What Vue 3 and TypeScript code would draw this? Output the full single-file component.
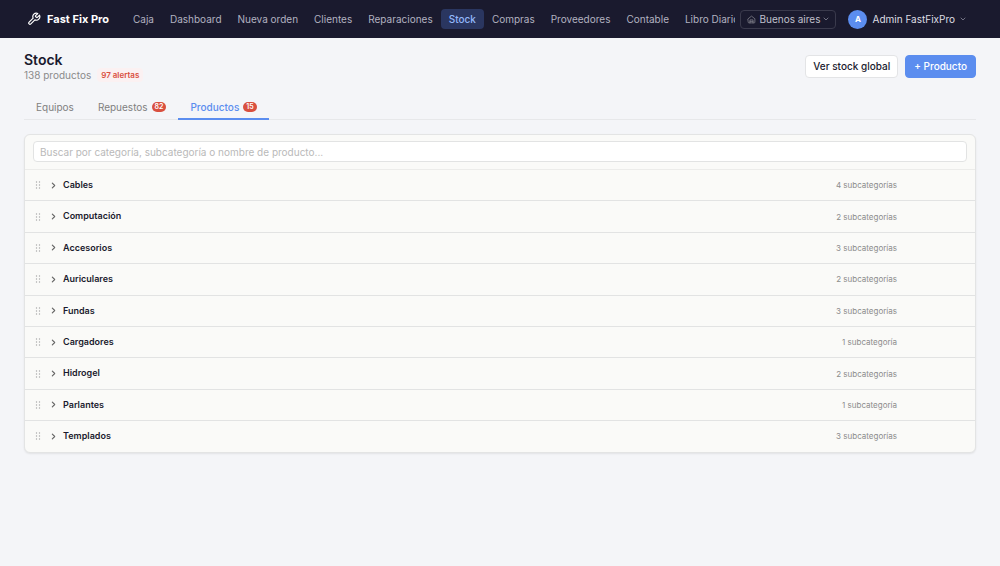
<script setup lang="ts">
import { ref } from 'vue'

interface Tab {
  label: string
  badge?: number
}

interface Category {
  name: string
  count: number
}

const navItems: string[] = [
  'Caja',
  'Dashboard',
  'Nueva orden',
  'Clientes',
  'Reparaciones',
  'Stock',
  'Compras',
  'Proveedores',
  'Contable',
  'Libro Diario',
]

const tabs: Tab[] = [
  { label: 'Equipos' },
  { label: 'Repuestos', badge: 82 },
  { label: 'Productos', badge: 15 },
]

const categories: Category[] = [
  { name: 'Cables', count: 4 },
  { name: 'Computación', count: 2 },
  { name: 'Accesorios', count: 3 },
  { name: 'Auriculares', count: 2 },
  { name: 'Fundas', count: 3 },
  { name: 'Cargadores', count: 1 },
  { name: 'Hidrogel', count: 2 },
  { name: 'Parlantes', count: 1 },
  { name: 'Templados', count: 3 },
]

const activeNav = ref('Stock')
const activeTab = ref('Productos')
const search = ref('')

const countLabel = (n: number): string => `${n} ${n === 1 ? 'subcategoría' : 'subcategorías'}`
</script>

<template>
  <header class="topbar">
    <a href="#" class="brand">
      <svg class="brand-icon" viewBox="0 0 24 24" aria-hidden="true">
        <path d="M14.7 6.3a1 1 0 0 0 0 1.4l1.6 1.6a1 1 0 0 0 1.4 0l3.77-3.77a6 6 0 0 1-7.94 7.94l-6.91 6.91a2.12 2.12 0 0 1-3-3l6.91-6.91a6 6 0 0 1 7.94-7.94l-3.76 3.76z" />
      </svg>
      <span>Fast Fix Pro</span>
    </a>
    <nav class="nav">
      <a
        v-for="item in navItems"
        :key="item"
        href="#"
        class="nav-link"
        :class="{ active: item === activeNav }"
        @click.prevent="activeNav = item"
      >{{ item }}</a>
    </nav>
    <button type="button" class="branch">
      <svg class="home-icon" viewBox="0 0 24 24" aria-hidden="true">
        <path d="M3 10l9-7 9 7v9a2 2 0 0 1-2 2H5a2 2 0 0 1-2-2z" />
        <path d="M8 21v-8h8v8M8 17h8" />
      </svg>
      <span>Buenos aires</span>
      <svg class="caret" viewBox="0 0 24 24" aria-hidden="true"><path d="M4 8l8 8 8-8" /></svg>
    </button>
    <button type="button" class="user">
      <span class="avatar">A</span>
      <span>Admin FastFixPro</span>
      <svg class="caret" viewBox="0 0 24 24" aria-hidden="true"><path d="M4 8l8 8 8-8" /></svg>
    </button>
  </header>

  <main class="page">
    <div class="heading">
      <div>
        <h1>Stock</h1>
        <p class="summary">
          <span>138 productos</span>
          <span class="alerts">97 alertas</span>
        </p>
      </div>
      <div class="actions">
        <button type="button" class="btn">Ver stock global</button>
        <button type="button" class="btn primary">+ Producto</button>
      </div>
    </div>

    <div class="tabs" role="tablist">
      <button
        v-for="tab in tabs"
        :key="tab.label"
        type="button"
        role="tab"
        class="tab"
        :class="{ active: tab.label === activeTab }"
        :aria-selected="tab.label === activeTab"
        @click="activeTab = tab.label"
      >
        <span>{{ tab.label }}</span>
        <span v-if="tab.badge" class="badge">{{ tab.badge }}</span>
      </button>
    </div>

    <section class="panel">
      <div class="search">
        <input
          v-model="search"
          type="text"
          aria-label="Buscar productos"
          placeholder="Buscar por categoría, subcategoría o nombre de producto..."
        />
      </div>
      <ul class="list">
        <li v-for="cat in categories" :key="cat.name" class="row">
          <svg class="grip" viewBox="0 0 6 8" aria-hidden="true">
            <circle cx="1.5" cy="1" r="0.7" /><circle cx="4.5" cy="1" r="0.7" />
            <circle cx="1.5" cy="4" r="0.7" /><circle cx="4.5" cy="4" r="0.7" />
            <circle cx="1.5" cy="7" r="0.7" /><circle cx="4.5" cy="7" r="0.7" />
          </svg>
          <button type="button" class="toggle">
            <svg class="chevron" viewBox="0 0 24 24" aria-hidden="true"><path d="M8 4l8 8-8 8" /></svg>
            <span>{{ cat.name }}</span>
          </button>
          <span class="count">{{ countLabel(cat.count) }}</span>
        </li>
      </ul>
    </section>
  </main>
</template>

<style>
body {
  margin: 0;
  background: #f4f5f8;
}
</style>

<style scoped>
.topbar,
.page,
.topbar button,
.page button,
.page input {
  font-family: Inter, "Liberation Sans", sans-serif;
}

.topbar *,
.page * {
  box-sizing: border-box;
}

button {
  margin: 0;
  padding: 0;
  border: 0;
  background: none;
  cursor: pointer;
}

a {
  text-decoration: none;
}

svg {
  flex: none;
  fill: none;
  stroke: currentColor;
  stroke-linecap: round;
  stroke-linejoin: round;
}

.topbar {
  display: flex;
  align-items: center;
  height: 38px;
  padding: 0 24px;
  background: #1a1a2e;
}

.brand {
  display: flex;
  align-items: center;
  gap: 6px;
  margin: 0 16px 0 3px;
  color: #fff;
  font-size: 11px;
  font-weight: 700;
  white-space: nowrap;
}

.brand-icon {
  width: 14px;
  height: 14px;
  stroke-width: 2;
}

.nav {
  display: flex;
  flex: 1;
  min-width: 0;
  overflow: hidden;
}

.nav-link {
  padding: 0 8px;
  border-radius: 4px;
  color: #b2b2c0;
  font-size: 10px;
  line-height: 20px;
  white-space: nowrap;
}

.nav-link.active {
  background: #2a3660;
  color: #93b8fb;
  font-weight: 500;
}

.branch {
  display: flex;
  align-items: center;
  gap: 3px;
  height: 19px;
  margin-left: 5px;
  padding: 0 6px;
  border: 1px solid #3a3a4c;
  border-radius: 4px;
  color: #c0c0cc;
  font-size: 10px;
  white-space: nowrap;
}

.home-icon {
  width: 9px;
  height: 9px;
  color: #85858f;
  stroke-width: 2;
}

.caret {
  width: 6px;
  height: 6px;
  color: #9090a0;
  stroke-width: 3;
}

.user {
  display: flex;
  align-items: center;
  gap: 5px;
  margin: 0 10px 0 12px;
  color: #dedee4;
  font-size: 10px;
  white-space: nowrap;
}

.avatar {
  width: 19px;
  border-radius: 50%;
  background: #5b8def;
  color: #fff;
  font-size: 8px;
  font-weight: 700;
  line-height: 19px;
  text-align: center;
}

.page {
  padding: 14px 24px 24px;
}

.heading {
  display: flex;
  justify-content: space-between;
}

h1 {
  margin: 0;
  color: #1a1a2e;
  font-size: 14px;
  font-weight: 600;
  line-height: 16px;
}

.summary {
  display: flex;
  align-items: center;
  gap: 6px;
  margin: 0;
  color: #8a8a8a;
  font-size: 10px;
  line-height: 14px;
}

.alerts {
  padding: 0 4px;
  border-radius: 4px;
  background: #fbf1f2;
  color: #d9503f;
  font-size: 8px;
  font-weight: 600;
}

.actions {
  display: flex;
  gap: 7px;
  padding-top: 3px;
}

.btn {
  height: 23px;
  padding: 0 7px 1px;
  border: 1px solid #e3e4e6;
  border-radius: 4px;
  background: #fff;
  color: #1a1a2e;
  font-size: 10px;
  font-weight: 500;
  white-space: nowrap;
}

.btn.primary {
  padding: 0 8px 1px;
  border-color: #5b8def;
  background: #5b8def;
  color: #fff;
}

.tabs {
  display: flex;
  margin: 13px 0 14px;
  border-bottom: 1px solid #e7e8ea;
}

.tab {
  display: flex;
  align-items: center;
  gap: 4px;
  height: 25px;
  margin-bottom: -1px;
  padding: 0 12px;
  border-bottom: 2px solid transparent;
  color: #808080;
  font-size: 10px;
}

.tab.active {
  border-bottom-color: #5b8def;
  color: #5b8def;
  font-weight: 500;
}

.badge {
  padding: 0 3px;
  border-radius: 5px;
  background: #d9503f;
  color: #fff;
  font-size: 7px;
  font-weight: 600;
  line-height: 10px;
}

.panel {
  overflow: hidden;
  border: 1px solid #e3e4e4;
  border-radius: 6px;
  background: #fafaf8;
  box-shadow: 0 1px 2px rgba(0, 0, 0, 0.08);
}

.search {
  padding: 6px 8px 7px;
  border-bottom: 1px solid #ececea;
}

.search input {
  display: block;
  width: 100%;
  height: 21px;
  padding: 0 6px;
  border: 1px solid #e2e3e3;
  border-radius: 4px;
  outline: none;
  background: #fff;
  color: #1a1a2e;
  font-size: 10px;
}

.search input::placeholder {
  color: #b9b9b9;
  opacity: 1;
}

.list {
  margin: 0;
  padding: 0;
  list-style: none;
}

.row {
  display: flex;
  align-items: center;
  padding: 8px 78px 8px 10px;
  border-bottom: 1px solid #e2e3e3;
  font-size: 9px;
  line-height: 1.6;
}

.row:last-child {
  border-bottom: 0;
}

.grip {
  width: 6px;
  height: 8px;
  fill: #a8a8a8;
  stroke: none;
}

.toggle {
  display: flex;
  flex: 1;
  align-items: center;
  gap: 6px;
  margin-left: 9px;
  color: #1a1a2e;
  font-size: 9px;
  font-weight: 600;
  line-height: inherit;
  text-align: left;
}

.chevron {
  width: 7px;
  height: 7px;
  color: #666;
  stroke-width: 4;
}

.count {
  color: #8c8c8c;
  font-size: 8px;
  line-height: 14px;
}
</style>
